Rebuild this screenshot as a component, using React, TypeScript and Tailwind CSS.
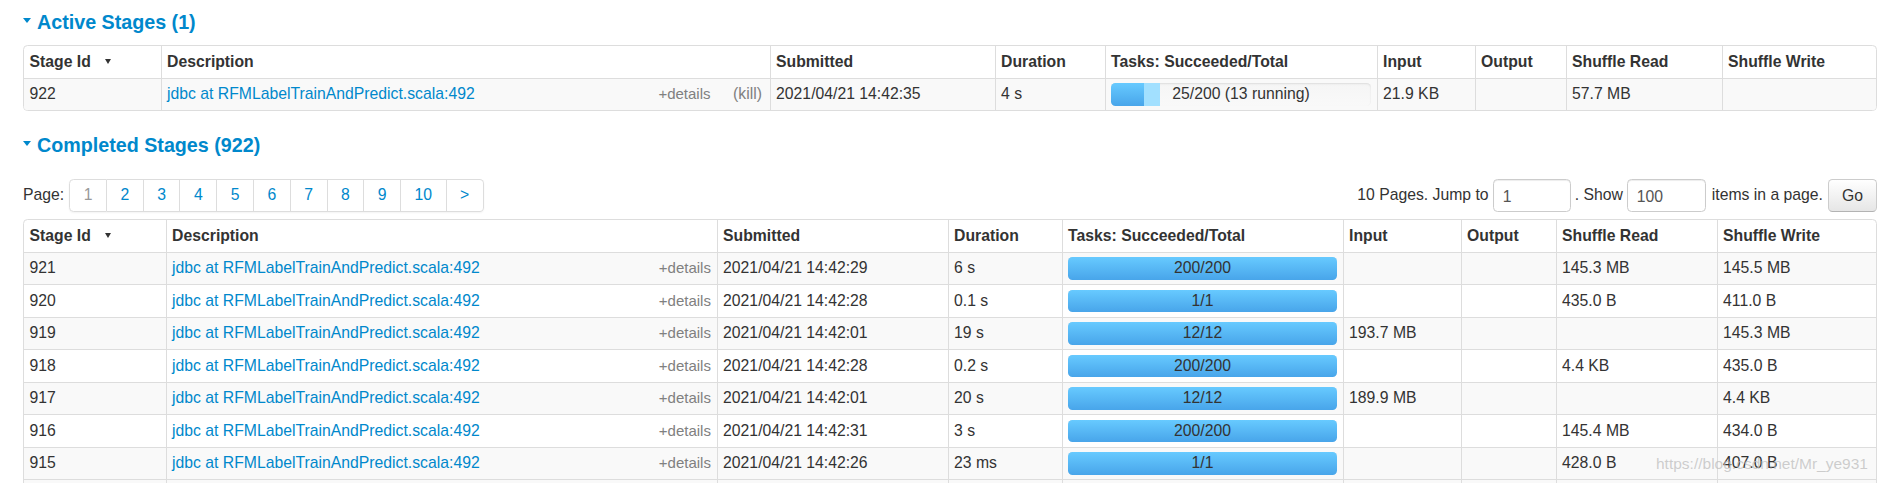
import React from "react";

type Row = {
  id: string;
  submitted: string;
  duration: string;
  tasks: string;
  input: string;
  output: string;
  sread: string;
  swrite: string;
};

const completedRows: Row[] = [
  { id: "921", submitted: "2021/04/21 14:42:29", duration: "6 s", tasks: "200/200", input: "", output: "", sread: "145.3 MB", swrite: "145.5 MB" },
  { id: "920", submitted: "2021/04/21 14:42:28", duration: "0.1 s", tasks: "1/1", input: "", output: "", sread: "435.0 B", swrite: "411.0 B" },
  { id: "919", submitted: "2021/04/21 14:42:01", duration: "19 s", tasks: "12/12", input: "193.7 MB", output: "", sread: "", swrite: "145.3 MB" },
  { id: "918", submitted: "2021/04/21 14:42:28", duration: "0.2 s", tasks: "200/200", input: "", output: "", sread: "4.4 KB", swrite: "435.0 B" },
  { id: "917", submitted: "2021/04/21 14:42:01", duration: "20 s", tasks: "12/12", input: "189.9 MB", output: "", sread: "", swrite: "4.4 KB" },
  { id: "916", submitted: "2021/04/21 14:42:31", duration: "3 s", tasks: "200/200", input: "", output: "", sread: "145.4 MB", swrite: "434.0 B" },
  { id: "915", submitted: "2021/04/21 14:42:26", duration: "23 ms", tasks: "1/1", input: "", output: "", sread: "428.0 B", swrite: "407.0 B" },
];

const headers = [
  "Stage Id",
  "Description",
  "Submitted",
  "Duration",
  "Tasks: Succeeded/Total",
  "Input",
  "Output",
  "Shuffle Read",
  "Shuffle Write",
];

const cell =
  "px-[5.6px] py-[4.5px] text-left align-top border-l border-[#ddd] first:border-l-0 whitespace-nowrap overflow-hidden";

function SortArrow() {
  return (
    <span className="inline-block ml-[14px] mb-[2px] w-0 h-0 border-l-[3px] border-r-[3px] border-t-[5px] border-l-transparent border-r-transparent border-t-[#333] align-middle" />
  );
}

function HeaderRow() {
  return (
    <tr>
      {headers.map((h, i) => (
        <th key={h} className={cell + " font-bold"}>
          {h}
          {i === 0 && <SortArrow />}
        </th>
      ))}
    </tr>
  );
}

function Description({ kill }: { kill?: boolean }) {
  return (
    <div className="flex items-start">
      <a className="text-[#0088cc]">jdbc at RFMLabelTrainAndPredict.scala:492</a>
      <span className="ml-auto text-[15px] text-[#808080]">+details</span>
      {kill && <span className="ml-[22.5px] mr-[2px] text-[#808080]">(kill)</span>}
    </div>
  );
}

function Progress({
  completed,
  running,
  label,
}: {
  completed: number;
  running: number;
  label: string;
}) {
  return (
    <div className="relative h-[22.5px] rounded-[4.5px] overflow-hidden bg-gradient-to-b from-[#f5f5f5] to-[#f9f9f9] shadow-[inset_0_1px_2px_rgba(0,0,0,0.1)] flex">
      <div
        className="h-full bg-gradient-to-b from-[#67caff] to-[#48a5ea]"
        style={{ width: `${completed}%` }}
      />
      <div className="h-full bg-[#a2e0ff]" style={{ width: `${running}%` }} />
      <span className="absolute inset-0 text-center leading-[22.5px] text-[#333]">{label}</span>
    </div>
  );
}

function ActiveTable() {
  const widths = [137, 609, 225, 110, 272, 98, 91, 156];
  return (
    <div className="border border-[#ddd] rounded-[4.5px] overflow-hidden">
      <table className="w-full table-fixed border-collapse">
        <colgroup>
          {widths.map((w, i) => (
            <col key={i} style={{ width: w }} />
          ))}
          <col />
        </colgroup>
        <thead>
          <HeaderRow />
        </thead>
        <tbody>
          <tr className="border-t border-[#ddd] bg-[#f9f9f9]">
            <td className={cell}>922</td>
            <td className={cell}>
              <Description kill />
            </td>
            <td className={cell}>2021/04/21 14:42:35</td>
            <td className={cell}>4 s</td>
            <td className={cell}>
              <Progress completed={12.5} running={6.5} label="25/200 (13 running)" />
            </td>
            <td className={cell}>21.9 KB</td>
            <td className={cell}></td>
            <td className={cell}>57.7 MB</td>
            <td className={cell}></td>
          </tr>
        </tbody>
      </table>
    </div>
  );
}

function CompletedTable() {
  const widths = [142, 551, 231, 114, 281, 118, 95, 161];
  return (
    <div className="border border-[#ddd] rounded-[4.5px] overflow-hidden">
      <table className="w-full table-fixed border-collapse">
        <colgroup>
          {widths.map((w, i) => (
            <col key={i} style={{ width: w }} />
          ))}
          <col />
        </colgroup>
        <thead>
          <HeaderRow />
        </thead>
        <tbody>
          {completedRows.map((r, i) => (
            <tr
              key={r.id}
              className={"border-t border-[#ddd] " + (i % 2 === 0 ? "bg-[#f9f9f9]" : "bg-white")}
            >
              <td className={cell}>{r.id}</td>
              <td className={cell}>
                <Description />
              </td>
              <td className={cell}>{r.submitted}</td>
              <td className={cell}>{r.duration}</td>
              <td className={cell}>
                <Progress completed={100} running={0} label={r.tasks} />
              </td>
              <td className={cell}>{r.input}</td>
              <td className={cell}>{r.output}</td>
              <td className={cell}>{r.sread}</td>
              <td className={cell}>{r.swrite}</td>
            </tr>
          ))}
          <tr className="border-t border-[#ddd] bg-[#f9f9f9]">
            {headers.map((h) => (
              <td key={h} className={cell + " h-[32px]"}></td>
            ))}
          </tr>
        </tbody>
      </table>
    </div>
  );
}

function Heading({ children }: { children: React.ReactNode }) {
  return (
    <h4 className="flex items-center text-[19.7px] leading-[22.5px] font-bold text-[#0088cc]">
      <span className="inline-block w-0 h-0 border-l-[4.5px] border-r-[4.5px] border-t-[5px] border-l-transparent border-r-transparent border-t-[#0088cc] mr-[6px] mb-[3px]" />
      {children}
    </h4>
  );
}

function PageBar() {
  const pages = ["1", "2", "3", "4", "5", "6", "7", "8", "9", "10", ">"];
  return (
    <div className="flex items-center justify-between h-[33px]">
      <div className="flex items-center">
        <span className="mr-[5px]">Page:</span>
        <ul className="flex rounded-[4.5px] shadow-[0_1px_2px_rgba(0,0,0,0.05)]">
          {pages.map((p, i) => (
            <li
              key={p}
              className={
                "px-[13.5px] py-[4.5px] leading-[22.5px] border-y border-r border-[#ddd] bg-white " +
                (i === 0
                  ? "border-l rounded-l-[4.5px] text-[#999]"
                  : i === pages.length - 1
                  ? "rounded-r-[4.5px] text-[#0088cc]"
                  : "text-[#0088cc]")
              }
            >
              {p}
            </li>
          ))}
        </ul>
      </div>
      <div className="flex items-center">
        <span>10 Pages. Jump to</span>
        <div className="ml-[4px] w-[78px] h-[33px] border border-[#ccc] rounded-[4.5px] shadow-[inset_0_1px_1px_rgba(0,0,0,0.075)] px-[9px] pt-[6px] leading-[22.5px] text-[#555]">
          1
        </div>
        <span className="ml-[4px]">. Show</span>
        <div className="ml-[4px] w-[79px] h-[33px] border border-[#ccc] rounded-[4.5px] shadow-[inset_0_1px_1px_rgba(0,0,0,0.075)] px-[9px] pt-[6px] leading-[22.5px] text-[#555]">
          100
        </div>
        <span className="ml-[6px]">items in a page.</span>
        <div className="ml-[5px] w-[49px] h-[33px] border border-[#ccc] border-b-[#b3b3b3] rounded-[4.5px] bg-gradient-to-b from-white to-[#e6e6e6] flex items-center justify-center text-[#333] pt-[2px]">
          Go
        </div>
      </div>
    </div>
  );
}

export default function App() {
  return (
    <div className="relative w-[1878px] h-[483px] overflow-hidden bg-white font-['Liberation_Sans',Arial,sans-serif] text-[15.75px] leading-[22.5px] text-[#333]">
      <div className="pl-[23px] pr-[1px] pt-[11px]">
        <Heading>Active Stages (1)</Heading>
        <div className="mt-[11.5px]">
          <ActiveTable />
        </div>
        <div className="mt-[23px]">
          <Heading>Completed Stages (922)</Heading>
        </div>
        <div className="mt-[22.5px]">
          <PageBar />
        </div>
        <div className="mt-[7px]">
          <CompletedTable />
        </div>
      </div>
      <div className="absolute left-[1656px] top-[453px] text-[15.5px] text-[rgba(190,190,190,0.75)] pointer-events-none">
        https://blog.csdn.net/Mr_ye931
      </div>
    </div>
  );
}
